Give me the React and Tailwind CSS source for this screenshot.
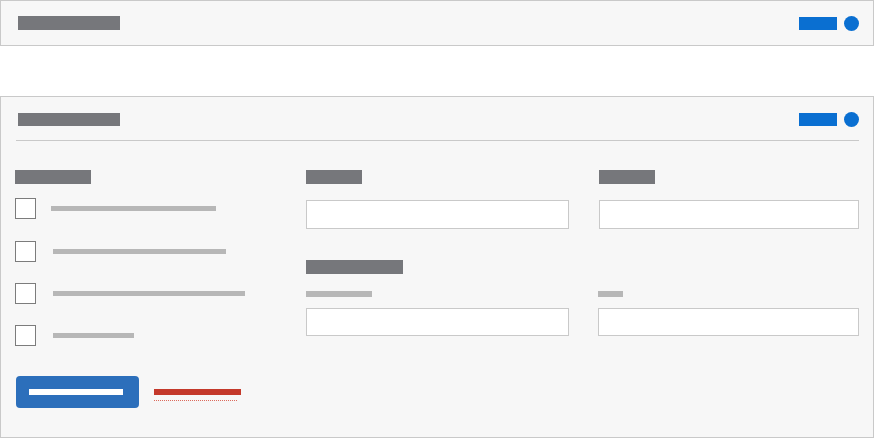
export default function App() {
  const rows = [
    { w: "w-[165px]", ml: "ml-[15px]", mt: "" },
    { w: "w-[173px]", ml: "ml-[17px]", mt: "mt-[22px]" },
    { w: "w-[192px]", ml: "ml-[17px]", mt: "mt-[21px]" },
    { w: "w-[81px]", ml: "ml-[17px]", mt: "mt-[21px]" },
  ];

  return (
    <div className="w-[875px] h-[440px] bg-white overflow-hidden">
      {/* top bar */}
      <div className="w-[874px] h-[46px] border border-[#c9c9c9] bg-[#f7f7f7] flex items-center justify-between pl-[17px] pr-[14px]">
        <div className="w-[102px] h-[14px] bg-[#76777b]" />
        <div className="flex items-center gap-[7px]">
          <div className="w-[38px] h-[13px] bg-[#0a6fd1]" />
          <div className="w-[15px] h-[15px] rounded-full bg-[#0a6fd1]" />
        </div>
      </div>

      {/* form panel */}
      <div className="mt-[50px] w-[874px] h-[342px] border border-[#c9c9c9] bg-[#f7f7f7] pt-[15px] pl-[14px] pr-[14px]">
        <div className="flex items-center justify-between h-[15px] pl-[3px]">
          <div className="w-[102px] h-[13px] bg-[#76777b]" />
          <div className="flex items-center gap-[7px]">
            <div className="w-[38px] h-[13px] bg-[#0a6fd1]" />
            <div className="w-[15px] h-[15px] rounded-full bg-[#0a6fd1]" />
          </div>
        </div>
        <div className="mt-[13px] ml-[1px] border-t border-[#c9c9c9]" />

        <div className="flex mt-[29px]">
          {/* left column */}
          <div className="w-[291px] flex flex-col">
            <div className="w-[76px] h-[14px] bg-[#76777b]" />
            <div className="mt-[14px] flex flex-col">
              {rows.map((r, i) => (
                <div key={i} className={`${r.mt} flex items-center`}>
                  <div className="w-[21px] h-[21px] border border-[#7c7c7c] bg-white" />
                  <div className={`${r.ml} ${r.w} h-[5px] bg-[#b7b7b7]`} />
                </div>
              ))}
            </div>
            <div className="mt-[30px] ml-[1px] flex items-start">
              <button className="w-[123px] h-[32px] rounded-[4px] bg-[#2c6fbb] flex items-center pl-[13px]">
                <span className="block w-[94px] h-[6px] bg-white" />
              </button>
              <div className="ml-[15px] mt-[13px] flex flex-col">
                <div className="w-[87px] h-[6px] bg-[#c4392b]" />
                <div className="mt-[5px] w-[83px] border-b border-dotted border-[#dc6a5c]" />
              </div>
            </div>
          </div>

          {/* middle column */}
          <div className="w-[263px] flex flex-col">
            <div className="w-[56px] h-[14px] bg-[#76777b]" />
            <div className="mt-[16px] w-[263px] h-[29px] border border-[#c9c9c9] bg-white" />
            <div className="mt-[31px] w-[97px] h-[14px] bg-[#76777b]" />
            <div className="mt-[17px] w-[66px] h-[6px] bg-[#b7b7b7]" />
            <div className="mt-[11px] w-[263px] h-[28px] border border-[#c9c9c9] bg-white" />
          </div>

          {/* right column */}
          <div className="ml-[29px] w-[261px] flex flex-col">
            <div className="ml-[1px] w-[56px] h-[14px] bg-[#76777b]" />
            <div className="ml-[1px] mt-[16px] w-[260px] h-[29px] border border-[#c9c9c9] bg-white" />
            <div className="mt-[62px] w-[25px] h-[6px] bg-[#b7b7b7]" />
            <div className="mt-[11px] w-[261px] h-[28px] border border-[#c9c9c9] bg-white" />
          </div>
        </div>
      </div>
    </div>
  );
}
